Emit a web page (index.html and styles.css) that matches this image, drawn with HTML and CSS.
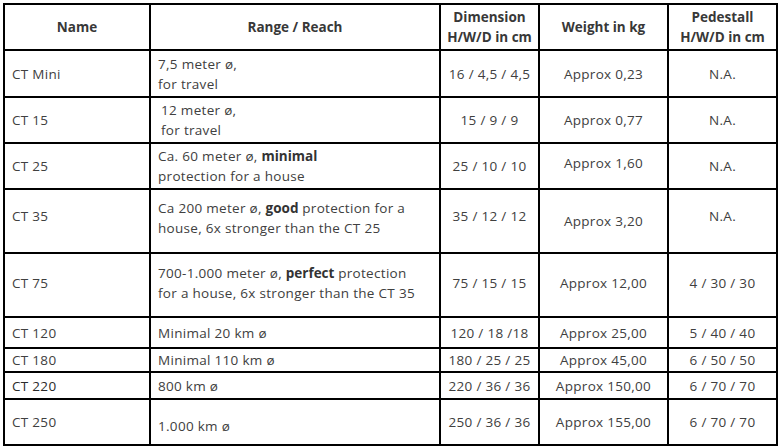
FILE: index.html
```html
<!DOCTYPE html>
<html>
<head>
<meta charset="utf-8">
<link rel="stylesheet" href="styles.css">
</head>
<body>
<table class="spec">
  <colgroup>
    <col class="c-name">
    <col class="c-range">
    <col class="c-dim">
    <col class="c-weight">
    <col class="c-ped">
  </colgroup>
  <thead>
    <tr class="h46">
      <th>Name</th>
      <th>Range / Reach</th>
      <th>Dimension<br>H/W/D in cm</th>
      <th>Weight in kg</th>
      <th>Pedestall<br>H/W/D in cm</th>
    </tr>
  </thead>
  <tbody>
    <tr class="h47">
      <td class="name">CT Mini</td>
      <td class="range">7,5 meter ø,<br>for travel</td>
      <td>16 / 4,5 / 4,5</td>
      <td>Approx 0,23</td>
      <td>N.A.</td>
    </tr>
    <tr class="h46">
      <td class="name">CT 15</td>
      <td class="range ind">12 meter ø,<br>for travel</td>
      <td>15 / 9 / 9</td>
      <td>Approx 0,77</td>
      <td>N.A.</td>
    </tr>
    <tr class="h46">
      <td class="name">CT 25</td>
      <td class="range">Ca. 60 meter ø, <b>minimal</b><br>protection for a house</td>
      <td>25 / 10 / 10</td>
      <td class="up">Approx 1,60</td>
      <td>N.A.</td>
    </tr>
    <tr class="h64">
      <td class="name up2">CT 35</td>
      <td class="range up">Ca 200 meter ø, <b>good</b> protection for a<br>house, 6x stronger than the CT 25</td>
      <td class="up2">35 / 12 / 12</td>
      <td>Approx 3,20</td>
      <td class="up2">N.A.</td>
    </tr>
    <tr class="h64 lift">
      <td class="name">CT 75</td>
      <td class="range">700-1.000 meter ø, <b>perfect</b> protection<br>for a house, 6x stronger than the CT 35</td>
      <td>75 / 15 / 15</td>
      <td>Approx 12,00</td>
      <td>4 / 30 / 30</td>
    </tr>
    <tr class="h31">
      <td class="name">CT 120</td>
      <td class="range">Minimal 20 km ø</td>
      <td>120 / 18 /18</td>
      <td>Approx 25,00</td>
      <td>5 / 40 / 40</td>
    </tr>
    <tr class="h24">
      <td class="name">CT 180</td>
      <td class="range">Minimal 110 km ø</td>
      <td>180 / 25 / 25</td>
      <td>Approx 45,00</td>
      <td>6 / 50 / 50</td>
    </tr>
    <tr class="h27">
      <td class="name dark">CT 220</td>
      <td class="range">800 km ø</td>
      <td>220 / 36 / 36</td>
      <td>Approx 150,00</td>
      <td>6 / 70 / 70</td>
    </tr>
    <tr class="h46">
      <td class="name">CT 250</td>
      <td class="range down">1.000 km ø</td>
      <td>250 / 36 / 36</td>
      <td>Approx 155,00</td>
      <td>6 / 70 / 70</td>
    </tr>
  </tbody>
</table>
</body>
</html>
```

FILE: styles.css
```css
html, body {
  margin: 0;
  padding: 0;
  background: #ffffff;
}

body {
  padding: 3px 0 0 3px;
  font-family: "Open Sans", "Liberation Sans", sans-serif;
  font-size: 13.5px;
  color: #404040;
}

.spec {
  table-layout: fixed;
  border-collapse: separate;
  border-spacing: 0;
  width: 775px;
  border-left: 2px solid #000;
  border-top: 2px solid #000;
}

.c-name { width: 146px; }
.c-range { width: 290px; }
.c-dim { width: 99px; }
.c-weight { width: 129px; }
.c-ped { width: 109px; }

.spec th,
.spec td {
  box-sizing: border-box;
  border-right: 2px solid #000;
  border-bottom: 2px solid #000;
  padding: 0 1px;
  text-align: center;
  vertical-align: middle;
  line-height: 20px;
  letter-spacing: 0.3px;
  white-space: nowrap;
}

.spec th {
  font-weight: 700;
  color: #383838;
  letter-spacing: 0;
}

.spec b {
  font-weight: 700;
  color: #333;
  letter-spacing: 0;
}

.spec td.name,
.spec td.range {
  text-align: left;
  padding-left: 7px;
}

.spec td.range.ind {
  padding-left: 10px;
}

.spec td.up {
  padding-bottom: 6px;
}

.spec td.up2 {
  padding-bottom: 10px;
}

.spec tr.lift td {
  padding-bottom: 5px;
}

.spec td.down {
  padding-top: 8px;
}

.spec td.dark {
  color: #2a2a2a;
}

.h46 { height: 46px; }
.h47 { height: 47px; }
.h64 { height: 64px; }
.h31 { height: 31px; }
.h24 { height: 24px; }
.h27 { height: 27px; }
```
